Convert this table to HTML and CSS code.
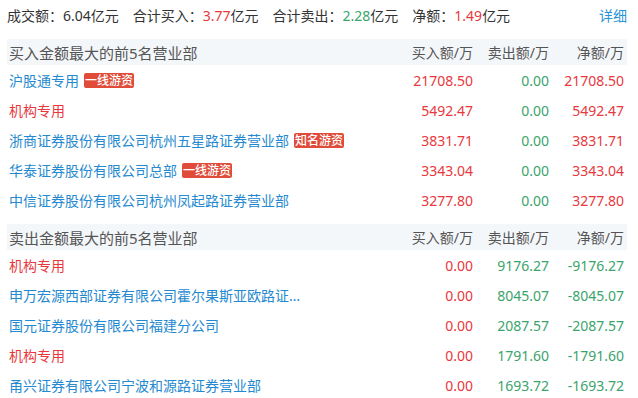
FILE: index.html
```html
<!DOCTYPE html>
<html lang="zh">
<head>
<meta charset="utf-8">
<link rel="stylesheet" href="styles.css">
</head>
<body>
<div class="page">
  <div class="summary">
    <span class="item">成交额：6.04亿元</span>
    <span class="item">合计买入：<span class="up">3.77</span>亿元</span>
    <span class="item">合计卖出：<span class="down">2.28</span>亿元</span>
    <span class="item">净额：<span class="up">1.49</span>亿元</span>
    <a class="more">详细</a>
  </div>

  <div class="table">
    <div class="row head">
      <div class="title">买入金额最大的前5名营业部</div>
      <div class="num">买入额/万</div>
      <div class="num">卖出额/万</div>
      <div class="num">净额/万</div>
    </div>
    <div class="row">
      <div class="name"><span class="label">沪股通专用</span><span class="tag">一线游资</span></div>
      <div class="num up">21708.50</div><div class="num down">0.00</div><div class="num up">21708.50</div>
    </div>
    <div class="row">
      <div class="name"><span class="label inst">机构专用</span></div>
      <div class="num up">5492.47</div><div class="num down">0.00</div><div class="num up">5492.47</div>
    </div>
    <div class="row">
      <div class="name"><span class="label">浙商证券股份有限公司杭州五星路证券营业部</span><span class="tag">知名游资</span></div>
      <div class="num up">3831.71</div><div class="num down">0.00</div><div class="num up">3831.71</div>
    </div>
    <div class="row">
      <div class="name"><span class="label">华泰证券股份有限公司总部</span><span class="tag">一线游资</span></div>
      <div class="num up">3343.04</div><div class="num down">0.00</div><div class="num up">3343.04</div>
    </div>
    <div class="row">
      <div class="name"><span class="label">中信证券股份有限公司杭州凤起路证券营业部</span></div>
      <div class="num up">3277.80</div><div class="num down">0.00</div><div class="num up">3277.80</div>
    </div>
  </div>

  <div class="table">
    <div class="row head">
      <div class="title">卖出金额最大的前5名营业部</div>
      <div class="num">买入额/万</div>
      <div class="num">卖出额/万</div>
      <div class="num">净额/万</div>
    </div>
    <div class="row">
      <div class="name"><span class="label inst">机构专用</span></div>
      <div class="num up">0.00</div><div class="num down">9176.27</div><div class="num down">-9176.27</div>
    </div>
    <div class="row">
      <div class="name"><span class="label">申万宏源西部证券有限公司霍尔果斯亚欧路证券营业部</span></div>
      <div class="num up">0.00</div><div class="num down">8045.07</div><div class="num down">-8045.07</div>
    </div>
    <div class="row">
      <div class="name"><span class="label">国元证券股份有限公司福建分公司</span></div>
      <div class="num up">0.00</div><div class="num down">2087.57</div><div class="num down">-2087.57</div>
    </div>
    <div class="row">
      <div class="name"><span class="label inst">机构专用</span></div>
      <div class="num up">0.00</div><div class="num down">1791.60</div><div class="num down">-1791.60</div>
    </div>
    <div class="row">
      <div class="name"><span class="label">甬兴证券有限公司宁波和源路证券营业部</span></div>
      <div class="num up">0.00</div><div class="num down">1693.72</div><div class="num down">-1693.72</div>
    </div>
  </div>
</div>
</body>
</html>
```
FILE: styles.css
```css
* { box-sizing: border-box; }
html, body { margin: 0; padding: 0; background: #fff; }
body {
  font-family: "Noto Sans", "Noto Sans CJK SC", sans-serif;
  font-size: 14px;
  color: #333;
}
.page { padding: 0 11px 0 7px; }
.summary {
  display: flex;
  align-items: center;
  height: 30px;
  margin-bottom: 9px;
}
.summary .item { margin-right: 14px; white-space: nowrap; }
.summary .more { margin-left: auto; color: #2b93d6; margin-right: 0; }
.up { color: #e8383d; }
.down { color: #3aa46c; }
.table { margin-bottom: 9px; }
.row {
  display: grid;
  grid-template-columns: 1fr 76px 76px 75px;
  align-items: center;
  height: 30px;
  padding: 0 3px 0 2px;
}
.row.head {
  height: 26px;
  background: #f4f7fa;
  color: #555;
}
.title { font-size: 15px; }
.num { text-align: right; white-space: nowrap; }
.name { display: flex; align-items: center; min-width: 0; }
.label {
  color: #2589cf;
  max-width: 292px;
  white-space: nowrap;
  overflow: hidden;
  text-overflow: ellipsis;
}
.label.inst { color: #e8383d; }
.tag {
  margin-left: 5px;
  background: #e04b3a;
  color: #fff;
  font-size: 12px;
  font-weight: 500;
  line-height: 15px;
  height: 15px;
  padding: 0 1px;
  border-radius: 2px;
  white-space: nowrap;
}
```
